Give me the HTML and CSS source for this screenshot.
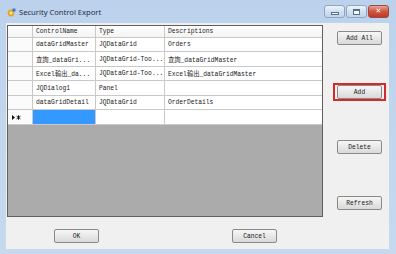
FILE: index.html
```html
<!DOCTYPE html>
<html>
<head>
  <title>Security Control Export</title>
  <link rel="stylesheet" href="styles.css">
</head>
<body>

  <div class="window">
    <div class="titlebar">
      <svg class="app-icon" width="9" height="9" viewBox="0 0 9 9">
        <circle cx="4" cy="5" r="3.4" fill="#e0a72c"/>
        <circle cx="4" cy="5" r="1.6" fill="#fbe38a"/>
        <rect x="5.5" y="0.5" width="3" height="3" fill="#3a78c9"/>
      </svg>
      <span class="title">Security Control Export</span>
      <div class="win-btns">
        <div class="win-btn"><span class="min-glyph"></span></div>
        <div class="win-btn"><span class="max-glyph"></span></div>
        <div class="win-btn close">&#10005;</div>
      </div>
    </div>

    <div class="client">
      <div class="main">
        <div class="gridview">
          <div class="grid">
            <div class="cell head corner"></div>
            <div class="cell head">ControlName</div>
            <div class="cell head">Type</div>
            <div class="cell head">Descriptions</div>

            <div class="cell rowhead"></div>
            <div class="cell">dataGridMaster</div>
            <div class="cell">JQDataGrid</div>
            <div class="cell">Orders</div>

            <div class="cell rowhead"></div>
            <div class="cell">查詢_dataGri...</div>
            <div class="cell">JQDataGrid-Too...</div>
            <div class="cell">查詢_dataGridMaster</div>

            <div class="cell rowhead"></div>
            <div class="cell">Excel輸出_da...</div>
            <div class="cell">JQDataGrid-Too...</div>
            <div class="cell">Excel輸出_dataGridMaster</div>

            <div class="cell rowhead"></div>
            <div class="cell">JQDialog1</div>
            <div class="cell">Panel</div>
            <div class="cell"></div>

            <div class="cell rowhead"></div>
            <div class="cell">dataGridDetail</div>
            <div class="cell">JQDataGrid</div>
            <div class="cell">OrderDetails</div>

            <div class="cell rowhead newrow">
              <svg width="9" height="5" viewBox="0 0 9 5">
                <path d="M0 0 L3 2.5 L0 5 Z" fill="#111"/>
                <path d="M6.5 0.3 V4.7 M4.6 1.2 L8.4 3.8 M4.6 3.8 L8.4 1.2" stroke="#111" stroke-width="1"/>
              </svg>
            </div>
            <div class="cell selected"></div>
            <div class="cell"></div>
            <div class="cell"></div>
          </div>
        </div>

        <div class="side">
          <button class="btn add-all">Add All</button>
          <div class="highlight">
            <button class="btn">Add</button>
          </div>
          <button class="btn delete">Delete</button>
          <button class="btn refresh">Refresh</button>
        </div>
      </div>

      <div class="footer">
        <button class="btn">OK</button>
        <button class="btn">Cancel</button>
      </div>
    </div>
  </div>

</body>
</html>
```

FILE: styles.css
```css
body {
  margin: 0;
  background: #c4d7ed;
}

.window {
  width: 396px;
  height: 254px;
  background: linear-gradient(#bcd2ec, #c7d9ee);
  display: flex;
  flex-direction: column;
  overflow: hidden;
}

.titlebar {
  height: 23px;
  display: flex;
  align-items: flex-start;
  padding-left: 7px;
}

.app-icon {
  margin-top: 8px;
}

.title {
  font-family: "Noto Sans", sans-serif;
  font-size: 7.6px;
  color: #1b2f4a;
  margin-left: 3px;
  margin-top: 7px;
  line-height: 10px;
}

.win-btns {
  margin-left: auto;
  margin-right: 7px;
  margin-top: 5px;
  display: flex;
  gap: 1px;
}

.win-btn {
  width: 19px;
  height: 11px;
  border: 1px solid #8ea4bf;
  border-radius: 3px;
  background: linear-gradient(#eef4fb, #d2e0f0 50%, #c2d4ea);
  display: flex;
  align-items: center;
  justify-content: center;
}

.win-btn.close {
  background: linear-gradient(#e8a593, #cf5541 50%, #c03a2a);
  border-color: #9a4a40;
  color: #fff;
  font-family: "DejaVu Sans", sans-serif;
  font-size: 7px;
  font-weight: bold;
  line-height: 11px;
}

.min-glyph {
  width: 6px;
  height: 1px;
  margin-top: 4px;
  background: #fff;
  border: 1px solid #56708f;
}

.max-glyph {
  width: 5px;
  height: 3px;
  border: 1px solid #56708f;
  border-top-width: 2px;
  background: #fff;
}

.client {
  margin: 0 7px 5px 6px;
  flex: 1;
  background: #f0f0f0;
  display: flex;
  flex-direction: column;
  padding: 2px 0 0 1px;
}

.main {
  display: flex;
}

.gridview {
  width: 316px;
  height: 192px;
  box-sizing: border-box;
  border: 1px solid #5f5f5f;
  background: #ababab;
}

.grid {
  display: grid;
  grid-template-columns: 25px 63px 69px 1fr;
  grid-template-rows: 12px 14px 15px 14px 15px 14px 15px;
  font-family: "Liberation Mono", "Noto Sans CJK TC", monospace;
  font-size: 6.3px;
  color: #1a1a1a;
}

.cell {
  background: #fff;
  border-right: 1px solid #c9c9c9;
  border-bottom: 1px solid #c9c9c9;
  padding-left: 3px;
  display: flex;
  align-items: center;
  white-space: nowrap;
  overflow: hidden;
}

.cell:nth-child(4n) {
  border-right: none;
}

.head {
  background: linear-gradient(#ffffff, #f3f3f3);
}

.rowhead {
  background: #fbfbfb;
}

.newrow {
  padding-left: 4px;
}

.selected {
  background: #3399ff;
}

.side {
  margin-left: 14px;
  display: flex;
  flex-direction: column;
  padding-top: 6px;
}

.btn {
  width: 45px;
  height: 14px;
  padding: 0;
  font-family: "Liberation Mono", monospace;
  font-size: 6.3px;
  color: #1a1a1a;
  border: 1px solid #8a8a8a;
  border-radius: 2px;
  background: linear-gradient(#f6f6f6, #e8e8e8 50%, #d9d9d9);
}

.highlight {
  display: flex;
  margin: 38px 0 0 -4px;
  padding: 0 2px;
  border: 2px solid #d42a2a;
  width: 45px;
}

.delete {
  margin-top: 39px;
}

.refresh {
  margin-top: 42px;
}

.footer {
  display: flex;
  margin-top: 12px;
  padding-left: 47px;
  gap: 133px;
}
```
